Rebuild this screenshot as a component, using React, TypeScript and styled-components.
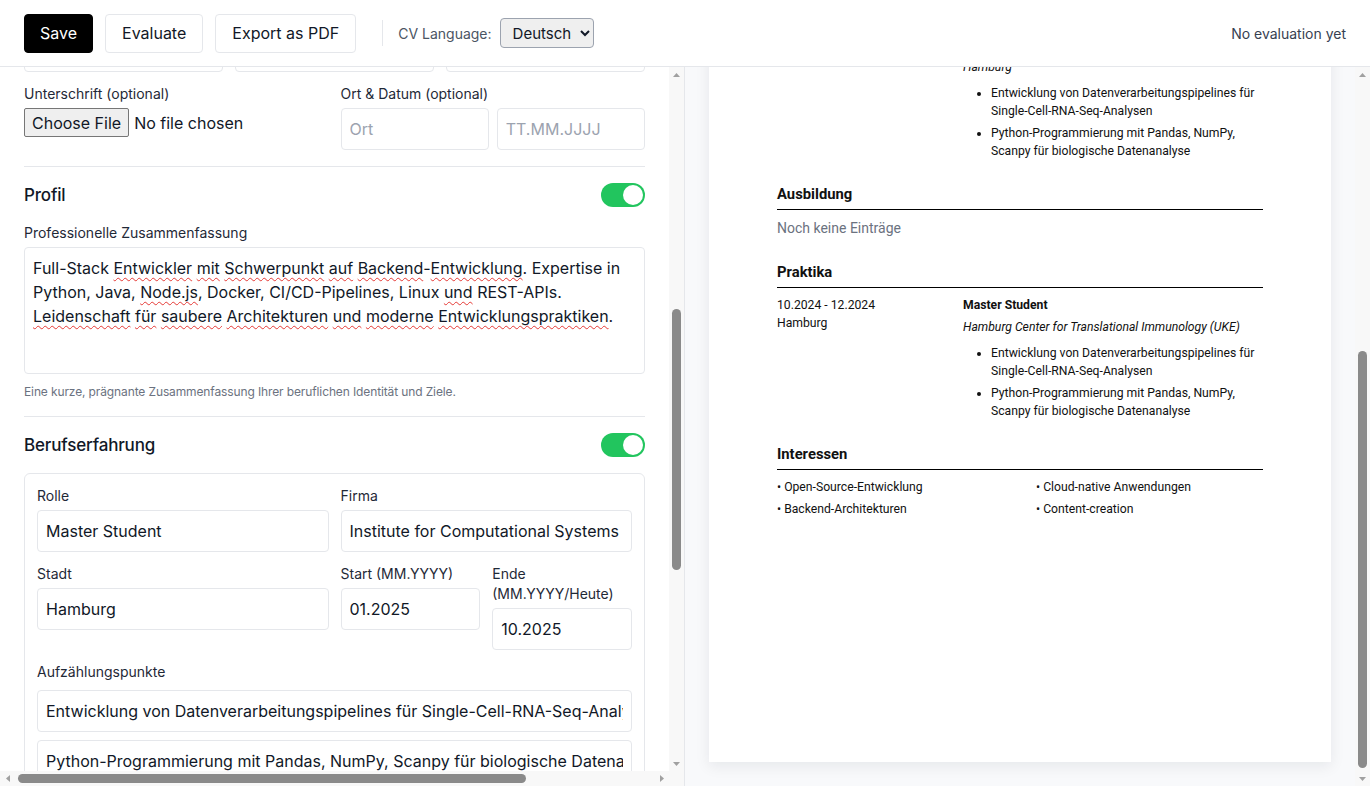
import React, { useLayoutEffect, useRef, useState } from 'react';
import styled, { createGlobalStyle } from 'styled-components';

const GlobalStyle = createGlobalStyle`
  * { box-sizing: border-box; }
  html, body { margin: 0; padding: 0; height: 100%; overflow: hidden; }
  body {
    font-family: Inter, "Noto Sans", sans-serif;
    color: #111827;
    background: #ffffff;
  }
  #root { height: 100%; }
`;

/* ---------- Scroll area with classic scrollbars ---------- */

const Frame = styled.div<{ $h?: boolean; $bordered?: boolean }>`
  display: grid;
  grid-template-columns: minmax(0, 1fr) 15px;
  grid-template-rows: minmax(0, 1fr) ${p => (p.$h ? '15px' : '0px')};
  min-height: 0;
  min-width: 0;
  border-right: ${p => (p.$bordered ? '1px solid #e5e7eb' : 'none')};
`;

const Scroller = styled.div<{ $tone?: string }>`
  overflow: auto;
  min-height: 0;
  min-width: 0;
  background: ${p => p.$tone ?? '#fff'};
  scrollbar-width: none;
  &::-webkit-scrollbar { display: none; }
`;

const VBar = styled.div`
  display: flex;
  flex-direction: column;
  background: #f8f8f8;
  min-height: 0;
`;

const HBar = styled.div`
  display: flex;
  background: #f8f8f8;
  min-width: 0;
`;

const Corner = styled.div`
  background: #f8f8f8;
`;

const Track = styled.div`
  position: relative;
  flex: 1;
  min-width: 0;
  min-height: 0;
`;

const Thumb = styled.div<{ $axis: 'v' | 'h' }>`
  position: absolute;
  background: #8a8a8a;
  border-radius: 5px;
  ${p => (p.$axis === 'v' ? 'left: 3px; right: 3px;' : 'top: 3px; bottom: 3px;')}
`;

const ArrowBox = styled.div`
  flex: none;
  width: 15px;
  height: 15px;
  display: flex;
  align-items: center;
  justify-content: center;
`;

const arrowPoints: Record<string, string> = {
  up: '0,4 3.5,0 7,4',
  down: '0,0 3.5,4 7,0',
  left: '4,0 0,3.5 4,7',
  right: '0,0 4,3.5 0,7',
};

function Arrow({ dir }: { dir: 'up' | 'down' | 'left' | 'right' }) {
  const v = dir === 'up' || dir === 'down';
  return (
    <ArrowBox>
      <svg width={v ? 7 : 4} height={v ? 4 : 7} viewBox={v ? '0 0 7 4' : '0 0 4 7'}>
        <polygon points={arrowPoints[dir]} fill="#a0a0a0" />
      </svg>
    </ArrowBox>
  );
}

type Metrics = { sh: number; ch: number; st: number; sw: number; cw: number; sl: number };

function ScrollPane({
  children,
  horizontal,
  bordered,
  tone,
  place,
}: {
  children: React.ReactNode;
  horizontal?: boolean;
  bordered?: boolean;
  tone?: string;
  place: (el: HTMLDivElement) => void;
}) {
  const ref = useRef<HTMLDivElement>(null);
  const [m, setM] = useState<Metrics | null>(null);

  useLayoutEffect(() => {
    const el = ref.current;
    if (!el) return;
    const read = () =>
      setM({ sh: el.scrollHeight, ch: el.clientHeight, st: el.scrollTop, sw: el.scrollWidth, cw: el.clientWidth, sl: el.scrollLeft });
    const run = () => {
      place(el);
      read();
    };
    run();
    if (document.fonts && document.fonts.ready) document.fonts.ready.then(run);
    el.addEventListener('scroll', read);
    return () => el.removeEventListener('scroll', read);
  }, []);

  let v = { pos: 0, size: 0 };
  let h = { pos: 0, size: 0 };
  if (m) {
    const vt = m.ch - 30;
    const vs = Math.max(20, (vt * m.ch) / m.sh);
    v = { size: vs, pos: m.sh > m.ch ? ((vt - vs) * m.st) / (m.sh - m.ch) : 0 };
    const ht = m.cw - 30;
    const hs = Math.max(20, (ht * m.cw) / m.sw);
    h = { size: hs, pos: m.sw > m.cw ? ((ht - hs) * m.sl) / (m.sw - m.cw) : 0 };
  }

  return (
    <Frame $h={horizontal} $bordered={bordered}>
      <Scroller ref={ref} $tone={tone}>
        {children}
      </Scroller>
      <VBar>
        <Arrow dir="up" />
        <Track>{m && m.sh > m.ch && <Thumb $axis="v" style={{ top: v.pos + 3, height: v.size - 6 }} />}</Track>
        <Arrow dir="down" />
      </VBar>
      {horizontal && (
        <HBar>
          <Arrow dir="left" />
          <Track>{m && m.sw > m.cw && <Thumb $axis="h" style={{ left: h.pos + 3, width: h.size - 6 }} />}</Track>
          <Arrow dir="right" />
        </HBar>
      )}
      {horizontal && <Corner />}
    </Frame>
  );
}

/* ---------- Top bar ---------- */

const Shell = styled.div`
  display: flex;
  flex-direction: column;
  height: 100vh;
`;

const TopBar = styled.header`
  flex: none;
  height: 67px;
  display: flex;
  align-items: center;
  gap: 12px;
  padding: 0 24px;
  border-bottom: 1px solid #e5e7eb;
  background: #fff;
`;

const Button = styled.button<{ $primary?: boolean }>`
  height: 39px;
  padding: 0 ${p => (p.$primary ? 15 : 16)}px;
  border-radius: 4px;
  font: inherit;
  font-size: 16px;
  cursor: pointer;
  border: 1px solid ${p => (p.$primary ? '#000' : '#e5e7eb')};
  background: ${p => (p.$primary ? '#000' : '#fff')};
  color: ${p => (p.$primary ? '#fff' : '#111827')};
`;

const VDivider = styled.div`
  width: 1px;
  height: 26px;
  background: #e5e7eb;
  margin: 0 3px 0 14px;
`;

const LangLabel = styled.label`
  display: flex;
  align-items: center;
  gap: 8px;
  font-size: 14px;
  color: #4b5563;
`;

const LangSelect = styled.select`
  height: 30px;
  width: 94px;
  font: inherit;
  font-size: 15px;
  color: #111827;
  padding: 0 4px 0 8px;
  border: 1px solid #9ca3af;
  border-radius: 4px;
  background: #efefef;
`;

const Status = styled.span`
  margin-left: auto;
  font-size: 14px;
  color: #374151;
`;

const Main = styled.main`
  flex: 1;
  min-height: 0;
  display: grid;
  grid-template-columns: 1fr 1fr;
  grid-template-rows: minmax(0, 1fr);
`;

/* ---------- Editor form ---------- */

const Form = styled.div`
  padding: 32px 24px 24px;
`;

const Section = styled.section<{ $first?: boolean }>`
  display: flex;
  flex-direction: column;
  gap: 16px;
  padding: ${p => (p.$first ? '0 0 16px' : '16px 0')};
  border-top: ${p => (p.$first ? 'none' : '1px solid #e5e7eb')};
`;

const SectionHead = styled.div`
  display: flex;
  align-items: center;
  justify-content: space-between;
  height: 24px;
`;

const SectionTitle = styled.h2`
  margin: 0;
  font-size: 17px;
  font-weight: 500;
  letter-spacing: -0.01em;
  color: #111827;
`;

const Toggle = styled.button<{ $on?: boolean }>`
  position: relative;
  width: 44px;
  height: 24px;
  border: none;
  padding: 0;
  border-radius: 12px;
  background: ${p => (p.$on ? '#22c55e' : '#d1d5db')};
  cursor: pointer;
  &::after {
    content: '';
    position: absolute;
    top: 2px;
    left: ${p => (p.$on ? '22px' : '2px')};
    width: 20px;
    height: 20px;
    border-radius: 50%;
    background: #fff;
  }
`;

const Stack = styled.div<{ $gap?: number }>`
  display: flex;
  flex-direction: column;
  gap: ${p => p.$gap ?? 12}px;
`;

const Grid = styled.div<{ $cols: number; $gap?: number }>`
  display: grid;
  grid-template-columns: repeat(${p => p.$cols}, minmax(0, 1fr));
  gap: ${p => p.$gap ?? 12}px;
  align-items: start;
`;

const Field = styled.div<{ $gap?: number }>`
  display: flex;
  flex-direction: column;
  gap: ${p => p.$gap ?? 4}px;
  min-width: 0;
`;

const Label = styled.label`
  font-size: 14px;
  line-height: 20px;
  color: #1f2937;
`;

const TextInput = styled.input`
  width: 100%;
  height: 42px;
  padding: 8px;
  font: inherit;
  font-size: 16px;
  line-height: 24px;
  color: #111827;
  border: 1px solid #e5e7eb;
  border-radius: 4px;
  background: #fff;
  &::placeholder { color: #9ca3af; }
`;

const SummaryBox = styled.div`
  width: 100%;
  height: 127px;
  padding: 8px;
  font-size: 16px;
  line-height: 24px;
  color: #111827;
  border: 1px solid #e5e7eb;
  border-radius: 4px;
  overflow: auto;
  outline: none;
  white-space: pre-wrap;
`;

const Misspelled = styled.span`
  text-decoration: underline wavy #e53935;
  text-decoration-thickness: 1px;
  text-decoration-skip-ink: none;
  text-underline-offset: 3px;
`;

const Help = styled.p`
  margin: 6px 0 0;
  font-size: 12px;
  line-height: 16px;
  letter-spacing: -0.01em;
  color: #6b7280;
`;

const FileInput = styled.input`
  font: inherit;
  font-size: 16px;
  color: #111827;
  &::file-selector-button {
    font: inherit;
    font-size: 16px;
    height: 29px;
    padding: 0 7px;
    margin-right: 5px;
    border: 1px solid #767676;
    border-radius: 2px;
    background: #efefef;
    color: #111827;
  }
`;

const Card = styled.div`
  display: flex;
  flex-direction: column;
  gap: 12px;
  padding: 12px;
  border: 1px solid #e5e7eb;
  border-radius: 6px;
`;

const GhostButton = styled.button`
  align-self: flex-start;
  height: 32px;
  padding: 0 12px;
  font: inherit;
  font-size: 14px;
  color: #111827;
  background: #fff;
  border: 1px dashed #d1d5db;
  border-radius: 4px;
`;

const ChipRow = styled.div`
  display: flex;
  gap: 8px;
  width: 808px;
  white-space: nowrap;
`;

const Chip = styled.span`
  flex: none;
  display: inline-flex;
  align-items: center;
  gap: 6px;
  height: 32px;
  padding: 0 10px;
  font-size: 13px;
  background: #f3f4f6;
  border-radius: 16px;
`;

const ChipInput = styled.input`
  flex: 1;
  min-width: 0;
  height: 32px;
  padding: 0 10px;
  font: inherit;
  font-size: 13px;
  border: 1px solid #e5e7eb;
  border-radius: 16px;
  &::placeholder { color: #9ca3af; }
`;

const Muted = styled.p`
  margin: 0;
  font-size: 14px;
  line-height: 20px;
  color: #6b7280;
`;

/* ---------- Preview ---------- */

const PreviewInner = styled.div`
  padding: 24px;
`;

const Page = styled.article`
  background: #fff;
  min-height: 297mm;
  padding: 68px;
  box-shadow: 0 4px 14px rgba(15, 23, 42, 0.08);
  font-family: Roboto, "Noto Sans", sans-serif;
  color: #111;
`;

const CvHeader = styled.header`
  margin-bottom: 54px;
`;

const CvName = styled.h1`
  margin: 0;
  font-size: 30px;
  line-height: 38px;
  font-weight: 700;
`;

const CvRole = styled.div`
  margin-top: 4px;
  font-size: 16px;
  line-height: 22px;
  color: #374151;
`;

const CvContact = styled.div`
  margin-top: 6px;
  font-size: 12px;
  line-height: 18px;
  color: #374151;
`;

const CvSection = styled.section`
  margin-top: 25px;
`;

const CvHeading = styled.h3`
  margin: 0 0 8px;
  padding-bottom: 6px;
  font-size: 14.8px;
  line-height: 18px;
  font-weight: 700;
  border-bottom: 1px solid #000;
`;

const CvText = styled.p`
  margin: 0;
  font-size: 12px;
  line-height: 18px;
`;

const CvEmpty = styled.p`
  margin: 0;
  font-size: 14px;
  line-height: 20px;
  color: #6b7280;
`;

const Entry = styled.div`
  display: grid;
  grid-template-columns: 186px 1fr;
  font-size: 12.2px;
  line-height: 18px;
`;

const EntryTitle = styled.div`
  font-weight: 700;
`;

const EntryOrg = styled.div`
  margin-top: 4px;
  font-style: italic;
`;

const Bullets = styled.ul`
  margin: 8px 0 0;
  padding-left: 28px;
  li + li { margin-top: 4px; }
`;

const InterestGrid = styled.div`
  display: grid;
  grid-template-columns: 1fr 1fr;
  column-gap: 32px;
  row-gap: 4px;
  font-size: 12.2px;
  line-height: 18px;
`;

const summary =
  'Full-Stack Entwickler mit Schwerpunkt auf Backend-Entwicklung. Expertise in Python, Java, Node.js, Docker, CI/CD-Pipelines, Linux und REST-APIs. Leidenschaft für saubere Architekturen und moderne Entwicklungspraktiken.';

/* words flagged by the spell checker in the editor */
const flagged = new Set([
  'Entwickler', 'mit', 'Schwerpunkt', 'auf', 'Backend', 'Entwicklung', 'Node.js', 'und',
  'Leidenschaft', 'für', 'saubere', 'Architekturen', 'moderne', 'Entwicklungspraktiken',
]);

function SpellText({ text }: { text: string }) {
  const parts = text.split(/([A-Za-zÄÖÜäöüß.]+)/);
  return (
    <>
      {parts.map((p, i) => {
        const word = p.replace(/\.$/, '');
        if (flagged.has(word)) {
          const tail = p.slice(word.length);
          return (
            <React.Fragment key={i}>
              <Misspelled>{word}</Misspelled>
              {tail}
            </React.Fragment>
          );
        }
        return <React.Fragment key={i}>{p}</React.Fragment>;
      })}
    </>
  );
}

const bullets = [
  'Entwicklung von Datenverarbeitungspipelines für Single-Cell-RNA-Seq-Analysen',
  'Python-Programmierung mit Pandas, NumPy, Scanpy für biologische Datenanalyse',
];

const company = 'Institute for Computational Systems Biology (ZBH), Hamburg';

const interests = ['Open-Source-Entwicklung', 'Cloud-native Anwendungen', 'Backend-Architekturen', 'Content-creation'];

function LabeledInput({ label, value, placeholder }: { label: string; value?: string; placeholder?: string }) {
  return (
    <Field>
      <Label>{label}</Label>
      <TextInput defaultValue={value} placeholder={placeholder} />
    </Field>
  );
}

export default function App() {
  const anchorRef = useRef<HTMLDivElement>(null);

  const placeEditor = (el: HTMLDivElement) => {
    const an = anchorRef.current;
    if (!an) return;
    el.scrollTop = 0;
    const off = an.getBoundingClientRect().top - el.getBoundingClientRect().top;
    el.scrollTop = off - 17;
    el.scrollLeft = 0;
  };

  const placePreview = (el: HTMLDivElement) => {
    el.scrollTop = el.scrollHeight;
  };

  return (
    <>
      <GlobalStyle />
      <Shell>
        <TopBar>
          <Button $primary>Save</Button>
          <Button>Evaluate</Button>
          <Button>Export as PDF</Button>
          <VDivider />
          <LangLabel>
            CV Language:
            <LangSelect defaultValue="de">
              <option value="de">Deutsch</option>
              <option value="en">English</option>
            </LangSelect>
          </LangLabel>
          <Status>No evaluation yet</Status>
        </TopBar>

        <Main>
          <ScrollPane horizontal bordered place={placeEditor}>
            <Form>
              <Section $first>
                <SectionHead>
                  <SectionTitle>Persönliche Daten</SectionTitle>
                </SectionHead>
                <Stack>
                  <Grid $cols={2}>
                    <LabeledInput label="Vollständiger Name" value="Alexander Weber" />
                    <LabeledInput label="Berufsbezeichnung" value="Full-Stack Entwickler" />
                  </Grid>
                  <Grid $cols={2}>
                    <LabeledInput label="E-Mail" value="alexander.weber@example.de" />
                    <LabeledInput label="Telefon" value="+49 170 1234567" />
                  </Grid>
                  <Grid $cols={2}>
                    <LabeledInput label="LinkedIn" value="linkedin.com/in/alexweber" />
                    <LabeledInput label="GitHub" value="github.com/alexweber" />
                  </Grid>
                  <Grid $cols={2}>
                    <LabeledInput label="Website" placeholder="https://" />
                    <LabeledInput label="Geburtsdatum" placeholder="TT.MM.JJJJ" />
                  </Grid>
                  <LabeledInput label="Straße & Hausnummer" value="Musterstraße 12" />
                  <Field>
                    <Label>Foto (optional)</Label>
                    <FileInput type="file" />
                  </Field>
                  <Grid $cols={3}>
                    <LabeledInput label="PLZ" value="20095" />
                    <LabeledInput label="Stadt" value="Hamburg" />
                    <LabeledInput label="Land" value="Deutschland" />
                  </Grid>
                  <Grid $cols={2} ref={anchorRef as any}>
                    <Field>
                      <Label>Unterschrift (optional)</Label>
                      <FileInput type="file" />
                    </Field>
                    <Field>
                      <Label>Ort &amp; Datum (optional)</Label>
                      <Grid $cols={2} $gap={8}>
                        <TextInput placeholder="Ort" />
                        <TextInput placeholder="TT.MM.JJJJ" />
                      </Grid>
                    </Field>
                  </Grid>
                </Stack>
              </Section>

              <Section>
                <SectionHead>
                  <SectionTitle>Profil</SectionTitle>
                  <Toggle $on aria-label="Profil anzeigen" />
                </SectionHead>
                <Field>
                  <Label>Professionelle Zusammenfassung</Label>
                  <SummaryBox role="textbox" aria-multiline="true" contentEditable suppressContentEditableWarning>
                    <SpellText text={summary} />
                  </SummaryBox>
                  <Help>Eine kurze, prägnante Zusammenfassung Ihrer beruflichen Identität und Ziele.</Help>
                </Field>
              </Section>

              <Section>
                <SectionHead>
                  <SectionTitle>Berufserfahrung</SectionTitle>
                  <Toggle $on aria-label="Berufserfahrung anzeigen" />
                </SectionHead>
                <Card>
                  <Grid $cols={2}>
                    <LabeledInput label="Rolle" value="Master Student" />
                    <LabeledInput label="Firma" value={company} />
                  </Grid>
                  <Grid $cols={2}>
                    <LabeledInput label="Stadt" value="Hamburg" />
                    <Grid $cols={2}>
                      <LabeledInput label="Start (MM.YYYY)" value="01.2025" />
                      <LabeledInput label="Ende (MM.YYYY/Heute)" value="10.2025" />
                    </Grid>
                  </Grid>
                  <Field $gap={8}>
                    <Label>Aufzählungspunkte</Label>
                    {bullets.map(b => (
                      <TextInput key={b} defaultValue={b} />
                    ))}
                    <GhostButton>+ Punkt hinzufügen</GhostButton>
                  </Field>
                </Card>
                <GhostButton>+ Berufserfahrung hinzufügen</GhostButton>
              </Section>

              <Section>
                <SectionHead>
                  <SectionTitle>Ausbildung</SectionTitle>
                  <Toggle $on aria-label="Ausbildung anzeigen" />
                </SectionHead>
                <GhostButton>+ Ausbildung hinzufügen</GhostButton>
              </Section>

              <Section>
                <SectionHead>
                  <SectionTitle>Praktika</SectionTitle>
                  <Toggle $on aria-label="Praktika anzeigen" />
                </SectionHead>
                <Card>
                  <Muted>Master Student · Hamburg Center for Translational Immunology (UKE)</Muted>
                </Card>
              </Section>

              <Section>
                <SectionHead>
                  <SectionTitle>Interessen</SectionTitle>
                  <Toggle $on aria-label="Interessen anzeigen" />
                </SectionHead>
                <ChipRow>
                  {interests.map(i => (
                    <Chip key={i}>
                      {i} <span>×</span>
                    </Chip>
                  ))}
                  <ChipInput placeholder="Hinzufügen" />
                </ChipRow>
              </Section>
            </Form>
          </ScrollPane>

          <ScrollPane tone="#f8f9fb" place={placePreview}>
            <PreviewInner>
              <Page>
                <CvHeader>
                  <CvName>Alexander Weber</CvName>
                  <CvRole>Full-Stack Entwickler</CvRole>
                  <CvContact>Musterstraße 12, 20095 Hamburg · alexander.weber@example.de · +49 170 1234567</CvContact>
                  <CvContact>linkedin.com/in/alexweber · github.com/alexweber</CvContact>
                </CvHeader>

                <CvSection>
                  <CvHeading>Profil</CvHeading>
                  <CvText>{summary}</CvText>
                </CvSection>

                <CvSection>
                  <CvHeading>Berufserfahrung</CvHeading>
                  <Entry>
                    <div>
                      <div>01.2025 - 10.2025</div>
                      <div>Hamburg</div>
                    </div>
                    <div>
                      <EntryTitle>Master Student</EntryTitle>
                      <EntryOrg>{company}</EntryOrg>
                      <Bullets>
                        {bullets.map(b => (
                          <li key={b}>{b}</li>
                        ))}
                      </Bullets>
                    </div>
                  </Entry>
                </CvSection>

                <CvSection>
                  <CvHeading>Ausbildung</CvHeading>
                  <CvEmpty>Noch keine Einträge</CvEmpty>
                </CvSection>

                <CvSection>
                  <CvHeading>Praktika</CvHeading>
                  <Entry>
                    <div>
                      <div>10.2024 - 12.2024</div>
                      <div>Hamburg</div>
                    </div>
                    <div>
                      <EntryTitle>Master Student</EntryTitle>
                      <EntryOrg>Hamburg Center for Translational Immunology (UKE)</EntryOrg>
                      <Bullets>
                        {bullets.map(b => (
                          <li key={b}>{b}</li>
                        ))}
                      </Bullets>
                    </div>
                  </Entry>
                </CvSection>

                <CvSection>
                  <CvHeading>Interessen</CvHeading>
                  <InterestGrid>
                    {interests.map(i => (
                      <div key={i}>• {i}</div>
                    ))}
                  </InterestGrid>
                </CvSection>
              </Page>
            </PreviewInner>
          </ScrollPane>
        </Main>
      </Shell>
    </>
  );
}
